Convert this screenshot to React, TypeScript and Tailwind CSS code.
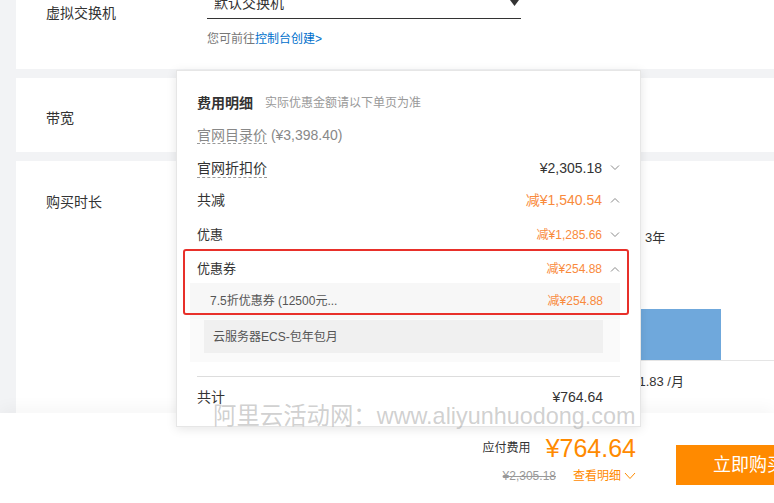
import React from 'react';

const FONT = { fontFamily: '"Liberation Sans", "Noto Sans CJK SC", sans-serif' };

function Chevron({ up }: { up?: boolean }) {
    return (
        <svg width="10" height="6" viewBox="0 0 10 6" className="ml-[8px] shrink-0">
            {up ? (
                <polyline points="1,5.5 5,1.5 9,5.5" fill="none" stroke="#8a8a8a" strokeWidth="1" />
            ) : (
                <polyline points="1,0.5 5,4.5 9,0.5" fill="none" stroke="#8a8a8a" strokeWidth="1" />
            )}
        </svg>
    );
}

function Row({ label, value, h, size, valueSize, orange, chevron, dashed }: any) {
    return (
        <div className={`flex items-center justify-between ${h}`}>
            <span
                className={`${size} text-[#333] ${dashed ? 'border-b border-dashed border-[#999] leading-[18px]' : ''}`}
            >
                {label}
            </span>
            <div className="flex items-center">
                <span className={`${valueSize || size} ${orange ? 'text-[#f98a3c]' : 'text-[#333]'}`}>{value}</span>
                {chevron && <Chevron up={chevron === 'up'} />}
            </div>
        </div>
    );
}

export default function App() {
    return (
        <div className="relative w-[774px] h-[503px] overflow-hidden bg-[#f2f3f5]" style={FONT}>
            <div className="pl-4 flex flex-col">
                {/* 虚拟交换机 */}
                <div className="h-[69px] bg-white flex overflow-hidden">
                    <div className="w-[191px] pl-[30px] pt-[3px] text-[14px] text-[#333] shrink-0">虚拟交换机</div>
                    <div className="flex flex-col">
                        <div className="-mt-[12px] w-[314px] h-[31px] border-b border-[#333] flex items-center justify-between pl-[7px] pr-[2px]">
                            <span className="text-[14px] text-[#333]">默认交换机</span>
                            <svg width="9" height="6" viewBox="0 0 9 6">
                                <polygon points="0,0 9,0 4.5,6" fill="#333" />
                            </svg>
                        </div>
                        <div className="mt-[11px] text-[12px] text-[#777]">
                            您可前往<span className="text-[#0070cc]">控制台创建&gt;</span>
                        </div>
                    </div>
                </div>

                {/* 带宽 */}
                <div className="mt-[9px] h-[74px] bg-white flex items-center">
                    <div className="pl-[30px] pt-[6px] text-[14px] text-[#333]">带宽</div>
                </div>

                {/* 购买时长 */}
                <div className="mt-[9px] h-[252px] bg-white flex justify-between">
                    <div className="pl-[30px] pt-[31px] text-[14px] text-[#333]">购买时长</div>
                    <div className="w-[133px] flex flex-col">
                        <div className="pt-[69px] pl-[4px] text-[13px] leading-[16px] text-[#333]">3年</div>
                        <div className="mt-[63px] h-[52px] border-b border-[#e5e5e5]">
                            <div className="w-[80px] h-[51px] bg-[#6fa8dc]" />
                        </div>
                        <div className="mt-[11px] -ml-[17px] text-[13px] text-[#333]">¥61.83 /月</div>
                    </div>
                </div>
            </div>

            {/* bottom bar */}
            <div className="absolute left-0 right-0 bottom-0 h-[90px] bg-white flex shadow-[0_-6px_14px_rgba(0,0,0,0.035)]">
                <div className="w-[636px] shrink-0 flex flex-col items-end pt-[21px]">
                    <div className="flex items-center h-[28px]">
                        <span className="text-[12px] text-[#333]">应付费用</span>
                        <span className="ml-[15px] text-[25px] leading-[28px] text-[#ff8a00]">¥764.64</span>
                    </div>
                    <div className="mt-[6px] flex items-center h-[16px]">
                        <span className="text-[12px] text-[#999] line-through">¥2,305.18</span>
                        <span className="ml-[17px] text-[12px] text-[#ff8a00]">查看明细</span>
                        <svg width="12" height="8" viewBox="0 0 12 8" className="ml-[3px]">
                            <polyline points="1,1 6,6.5 11,1" fill="none" stroke="#ff8a00" strokeWidth="1" />
                        </svg>
                    </div>
                </div>
                <div className="ml-[40px] mt-[32px] w-[130px] h-[40px] shrink-0 bg-[#ff8a00] flex items-center pl-[37px]">
                    <span className="text-[18px] text-white whitespace-nowrap">立即购买</span>
                </div>
            </div>

            {/* 费用明细 popover */}
            <div className="absolute left-[176px] top-[70px] w-[465px] h-[357px] bg-white border border-[#e6e6e6] shadow-[0_2px_10px_rgba(0,0,0,0.1)] pl-[20px] pr-[20px] pt-[22px]">
                <div className="flex items-center h-[20px]">
                    <span className="text-[14px] font-bold text-[#333]">费用明细</span>
                    <span className="ml-[12px] text-[12px] text-[#999]">实际优惠金额请以下单页为准</span>
                </div>
                <div className="mt-[6px] h-[32px] flex items-center">
                    <span className="text-[14px] text-[#888]">
                        <span className="border-b border-dashed border-[#999] leading-[18px]">官网目录价</span> (¥3,398.40)
                    </span>
                </div>
                <Row label="官网折扣价" value="¥2,305.18" h="h-[34px]" size="text-[14px]" chevron="down" dashed />
                <Row label="共减" value="减¥1,540.54" h="h-[30px]" size="text-[14px]" orange chevron="up" />
                <Row label="优惠" value="减¥1,285.66" h="h-[40px]" size="text-[13px]" valueSize="text-[12px]" orange chevron="down" />
                <Row label="优惠券" value="减¥254.88" h="h-[28px]" size="text-[13px]" valueSize="text-[12px]" orange chevron="up" />
                <div className="-ml-[7px] bg-[#fafafa] pb-[9px]">
                    <div className="h-[36px] flex items-center justify-between pl-[20px] pr-[17px] bg-[#f7f7f7]">
                        <span className="text-[12px] text-[#555]">7.5折优惠券 (12500元...</span>
                        <span className="text-[12px] text-[#f98a3c]">减¥254.88</span>
                    </div>
                    <div className="mt-[1px] ml-[14px] mr-[17px] h-[33px] bg-[#f0f0f0] flex items-center pl-[9px]">
                        <span className="text-[12px] text-[#555]">云服务器ECS-包年包月</span>
                    </div>
                </div>
                <div className="mt-[14px] h-px bg-[#dddddd]" />
                <div className="h-[40px] flex items-center justify-between pr-[17px]">
                    <span className="text-[14px] text-[#333]">共计</span>
                    <span className="text-[14px] text-[#333]">¥764.64</span>
                </div>

                {/* annotation */}
                <div className="absolute left-[6px] top-[178px] w-[446px] h-[66px] border-2 border-[#e8302a] rounded-[3px]" />
            </div>

            {/* watermark */}
            <div className="absolute left-[213px] top-[401px] text-[23.4px] leading-[30px] text-[rgba(150,150,150,0.45)] whitespace-nowrap pointer-events-none">
                阿里云活动网：www.aliyunhuodong.com
            </div>
        </div>
    );
}
